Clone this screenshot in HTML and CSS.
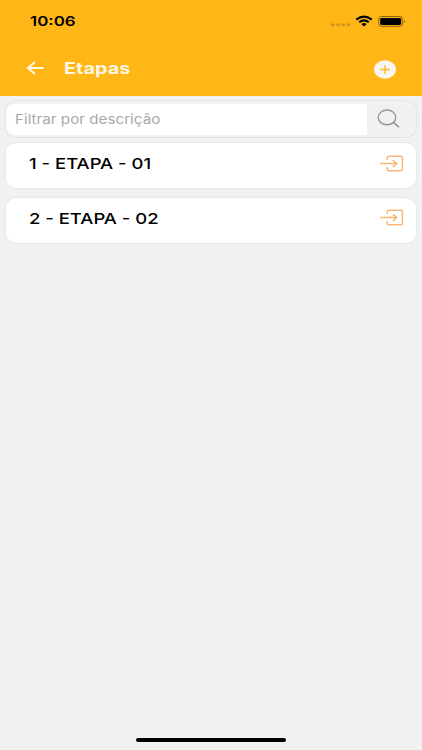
FILE: index.html
```
<!DOCTYPE html>
<html lang="pt-BR">
<head>
  <meta charset="UTF-8">
  <title>Etapas</title>
  <link rel="stylesheet" href="styles.css">
</head>
<body>
  <header class="header">
    <div class="status-bar">
      <span class="time">10:06</span>
      <svg class="status-icons" width="76" height="14" viewBox="0 0 76 14">
        <g fill="#d0951a">
          <ellipse cx="2.6" cy="10.8" rx="2" ry="1.6"/>
          <ellipse cx="8" cy="10.8" rx="2" ry="1.6"/>
          <ellipse cx="13.2" cy="10.8" rx="2" ry="1.6"/>
          <ellipse cx="18.4" cy="10.8" rx="2" ry="1.6"/>
        </g>
        <g fill="none" stroke="#000" stroke-width="2.1">
          <path d="M26.2 5.6Q34 -0.4 41.8 5.6"/>
          <path d="M29.2 8.2Q34 4.4 38.8 8.2"/>
        </g>
        <path d="M31.3 10.1Q34 8 36.7 10.1L34 12.4Z"/>
        <rect x="48.7" y="2.5" width="24" height="9.8" rx="2.8" fill="none" stroke="#8a6110"/>
        <rect x="50.2" y="3.9" width="21" height="7.1" rx="1.4"/>
        <path d="M74 5.9Q76 7.4 74 8.9Z" fill="#8a6110"/>
      </svg>
    </div>
    <div class="nav">
      <svg class="back" width="18" height="14" viewBox="0 0 18 14">
        <path d="M17.6 7H1.8M9 1L2 7L9 13" fill="none" stroke="#fff6e2" stroke-width="2.2"/>
      </svg>
      <h1 class="title">Etapas</h1>
      <svg class="add" width="22" height="19" viewBox="0 0 22 19">
        <ellipse cx="11" cy="9.5" rx="11" ry="9.2" fill="#f7f5f0"/>
        <path d="M6 9.5H16M11 5.2V13.8" stroke="#fdb92b" stroke-width="1.5"/>
      </svg>
    </div>
  </header>

  <main class="content">
    <div class="search">
      <div class="search-input"><span class="placeholder">Filtrar por descrição</span></div>
      <svg class="search-icon" width="24" height="20" viewBox="0 0 24 20">
        <g fill="none" stroke="#96969e" stroke-width="1.4">
          <ellipse cx="10" cy="8.4" rx="8.8" ry="7.4"/>
          <path d="M16.2 13.4L22 18.2" stroke-width="1.7"/>
        </g>
      </svg>
    </div>

    <div class="card">
      <span class="name">1 - ETAPA - 01</span>
      <svg class="enter" width="24" height="17" viewBox="0 0 24 17">
        <path d="M7.2 5V2.8Q7.2 1.3 9 1.3H20.6Q22.4 1.3 22.4 2.8V14.2Q22.4 15.7 20.6 15.7H9Q7.2 15.7 7.2 14.2V12M0.3 8.5H16.6M12.7 5.2L16.8 8.5L12.7 11.8" fill="none" stroke="#f7b778" stroke-width="1.5"/>
      </svg>
    </div>
    <div class="card">
      <span class="name">2 - ETAPA - 02</span>
      <svg class="enter" width="24" height="17" viewBox="0 0 24 17">
        <path d="M7.2 5V2.8Q7.2 1.3 9 1.3H20.6Q22.4 1.3 22.4 2.8V14.2Q22.4 15.7 20.6 15.7H9Q7.2 15.7 7.2 14.2V12M0.3 8.5H16.6M12.7 5.2L16.8 8.5L12.7 11.8" fill="none" stroke="#f7b778" stroke-width="1.5"/>
      </svg>
    </div>
  </main>

  <div class="home-bar"></div>
</body>
</html>
```
FILE: styles.css
```
* {
  box-sizing: border-box;
}
body {
  margin: 0;
  height: 750px;
  display: flex;
  flex-direction: column;
  background-color: #f1f1f1;
  font-family: Inter, "Liberation Sans", sans-serif;
  overflow: hidden;
}
svg {
  display: block;
  flex: none;
}
.header {
  height: 96px;
  background-color: #ffb717;
}
.status-bar {
  height: 42px;
  padding: 0 16px 0 30px;
  display: flex;
  align-items: center;
  justify-content: space-between;
}
.time, .title, .placeholder, .name {
  display: inline-block;
  white-space: nowrap;
  transform-origin: left center;
}
.time {
  font-size: 13.5px;
  font-weight: 600;
  transform: scaleX(1.25);
}
.nav {
  height: 54px;
  padding: 0 26px 0 26px;
  display: flex;
  align-items: center;
}
.back {
  margin-bottom: 2px;
}
.title {
  margin: 0 0 2px 20px;
  font-size: 16px;
  font-weight: 700;
  color: #fff6e2;
  transform: scaleX(1.24);
}
.add {
  margin: 1px 0 0 auto;
}
.content {
  flex: 1;
  padding: 4px 5px 0;
}
.search {
  height: 38px;
  margin-bottom: 4px;
  display: flex;
  align-items: center;
  border: 1px solid #e6e6e8;
  border-radius: 12px / 10px;
}
.search-input {
  width: 361px;
  height: 31px;
  padding-left: 9px;
  display: flex;
  align-items: center;
  background-color: #fff;
  border-radius: 9px 0 0 9px;
}
.placeholder {
  font-size: 13px;
  color: #a9a9a9;
  transform: scaleX(1.17);
}
.search-icon {
  margin-left: 10px;
}
.card {
  height: 47px;
  margin-bottom: 7.5px;
  padding: 12px 12px 0 23px;
  display: flex;
  justify-content: space-between;
  align-items: flex-start;
  background-color: #fff;
  border: 1px solid #e8e8ea;
  border-radius: 12px / 10px;
}
.card .enter {
  margin-top: -0.5px;
}
.name {
  font-size: 15px;
  line-height: 18px;
  font-weight: 500;
  color: #000;
  transform: scaleX(1.23);
}
.home-bar {
  width: 150px;
  height: 4px;
  margin: 0 auto 8px;
  background-color: #000;
  border-radius: 3px;
}
```
